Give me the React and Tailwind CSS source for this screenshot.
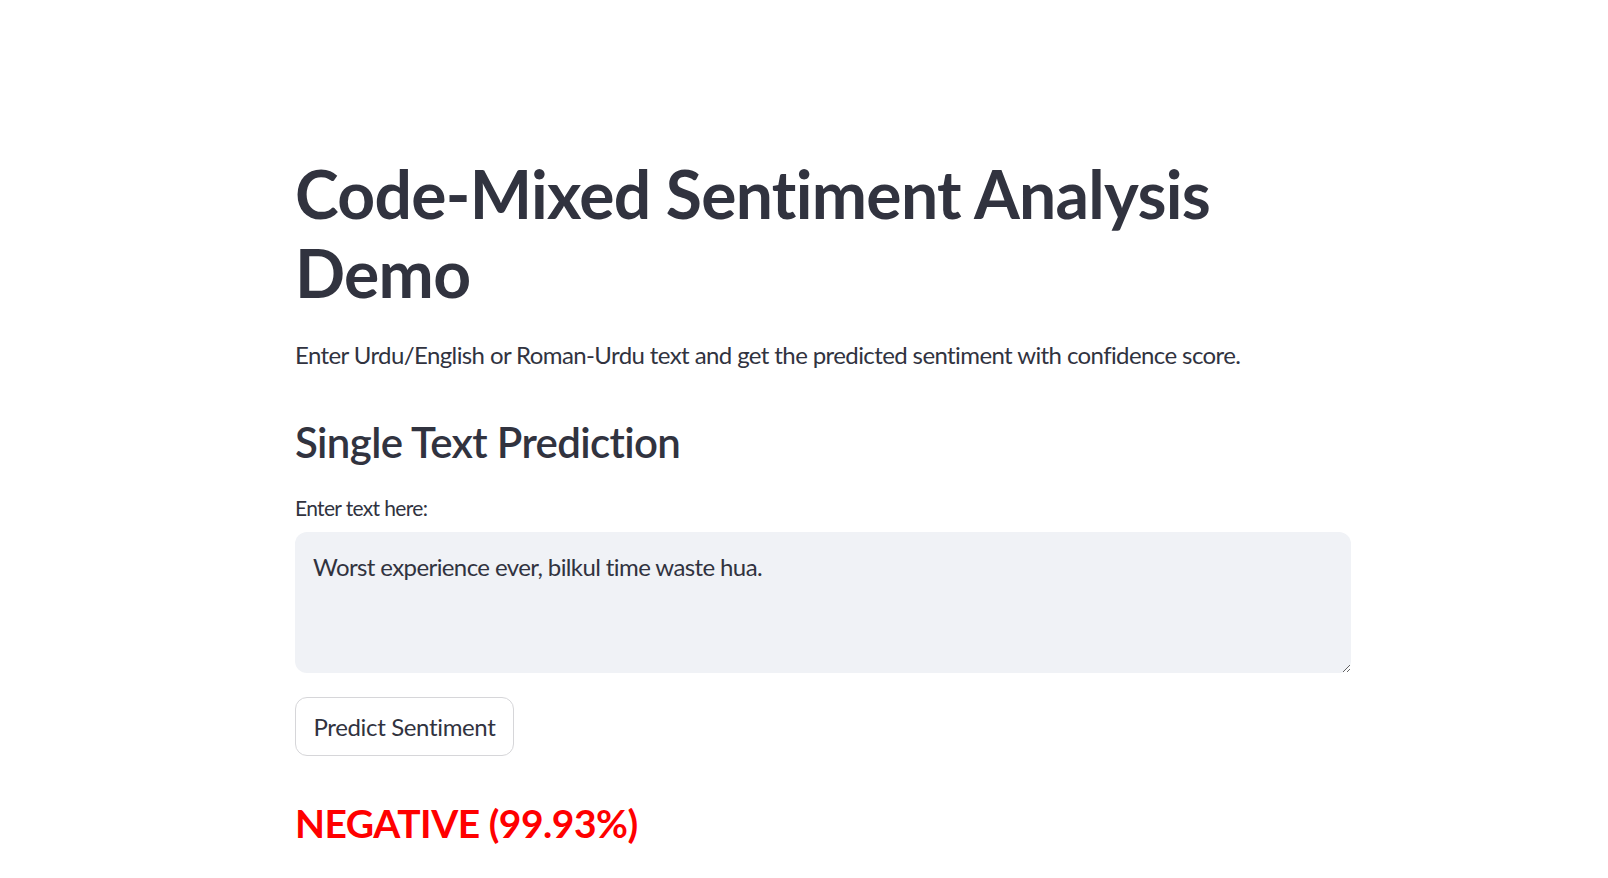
export default function App() {
  return (
    <div className="min-h-[878px] bg-white font-['Lato','Liberation_Sans',sans-serif] text-[#31333F]">
      <div className="ml-[295px] w-[1056px] pt-[154px] flex flex-col">
        <h1 className="text-[66px] leading-[79px] font-bold tracking-[-0.7px]">
          Code-Mixed Sentiment Analysis Demo
        </h1>
        <p className="mt-[24px] text-[24px] leading-[38px] tracking-[-0.6px]">
          Enter Urdu/English or Roman-Urdu text and get the predicted sentiment with confidence score.
        </p>
        <h3 className="mt-[43px] text-[42px] leading-[50px] font-semibold tracking-[-0.65px]">
          Single Text Prediction
        </h3>
        <label className="mt-[24px] text-[21px] leading-[34px] tracking-[-0.65px]">Enter text here:</label>
        <textarea
          className="mt-[7px] h-[141px] w-full resize-y rounded-[12px] bg-[#F0F2F6] px-[18px] py-[16px] text-[24px] leading-[38px] tracking-[-0.6px] outline-none"
          defaultValue="Worst experience ever, bilkul time waste hua."
        />
        <div className="mt-[24px]">
          <button className="h-[59px] w-[219px] rounded-[12px] border border-[#d6d6d9] bg-white text-[24px] tracking-[-0.35px]">
            Predict Sentiment
          </button>
        </div>
        <h3 className="mt-[42px] text-[39px] leading-[50px] font-bold tracking-[-0.5px] text-[#ff0000]">
          NEGATIVE (99.93%)
        </h3>
      </div>
    </div>
  );
}
